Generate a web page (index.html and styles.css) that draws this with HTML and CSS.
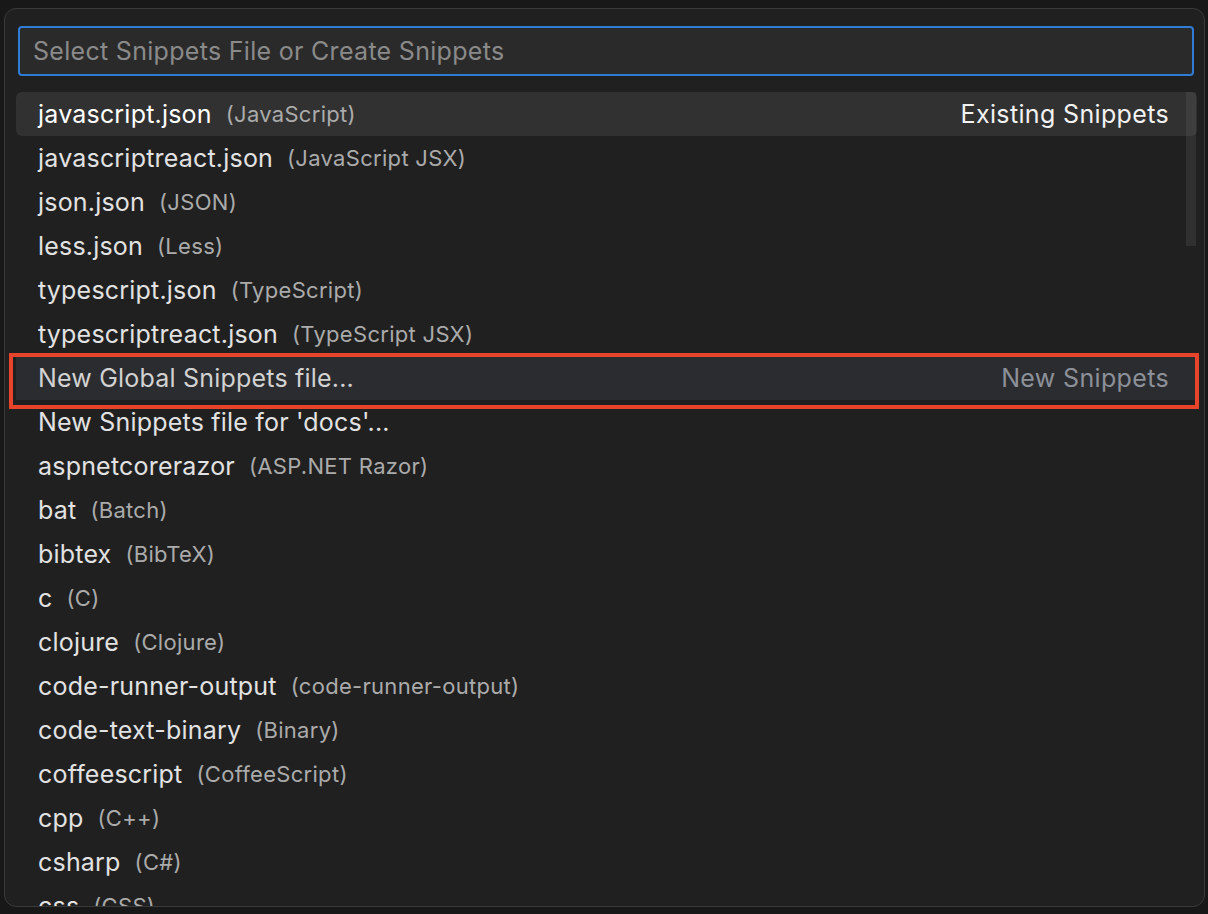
FILE: index.html
```html
<!DOCTYPE html>
<html>
<head>
<meta charset="utf-8">
<link rel="stylesheet" href="styles.css">
</head>
<body>
<div class="widget">
  <div class="input">Select Snippets File or Create Snippets</div>
  <div class="list">
    <div class="row active"><span class="label">javascript.json</span><span class="desc">(JavaScript)</span><span class="detail">Existing Snippets</span></div>
    <div class="row"><span class="label">javascriptreact.json</span><span class="desc">(JavaScript JSX)</span></div>
    <div class="row"><span class="label">json.json</span><span class="desc">(JSON)</span></div>
    <div class="row"><span class="label">less.json</span><span class="desc">(Less)</span></div>
    <div class="row"><span class="label">typescript.json</span><span class="desc">(TypeScript)</span></div>
    <div class="row"><span class="label">typescriptreact.json</span><span class="desc">(TypeScript JSX)</span></div>
    <div class="row hover"><span class="label">New Global Snippets file...</span><span class="detail">New Snippets</span></div>
    <div class="row"><span class="label">New Snippets file for 'docs'...</span></div>
    <div class="row"><span class="label">aspnetcorerazor</span><span class="desc">(ASP.NET Razor)</span></div>
    <div class="row"><span class="label">bat</span><span class="desc">(Batch)</span></div>
    <div class="row"><span class="label">bibtex</span><span class="desc">(BibTeX)</span></div>
    <div class="row"><span class="label">c</span><span class="desc">(C)</span></div>
    <div class="row"><span class="label">clojure</span><span class="desc">(Clojure)</span></div>
    <div class="row"><span class="label">code-runner-output</span><span class="desc">(code-runner-output)</span></div>
    <div class="row"><span class="label">code-text-binary</span><span class="desc">(Binary)</span></div>
    <div class="row"><span class="label">coffeescript</span><span class="desc">(CoffeeScript)</span></div>
    <div class="row"><span class="label">cpp</span><span class="desc">(C++)</span></div>
    <div class="row"><span class="label">csharp</span><span class="desc">(C#)</span></div>
    <div class="row"><span class="label">css</span><span class="desc">(CSS)</span></div>
  </div>
  <div class="scrollbar"></div>
  <div class="annotation"></div>
</div>
</body>
</html>
```

FILE: styles.css
```css
html, body {
  margin: 0;
  padding: 0;
  background: #181818;
  height: 914px;
  overflow: hidden;
}

body {
  font-family: Inter, "Noto Sans", sans-serif;
  -webkit-font-smoothing: antialiased;
}

.widget {
  position: relative;
  box-sizing: border-box;
  margin: 8px 0 0 4px;
  width: 1201px;
  height: 899px;
  background: #202020;
  border: 1px solid #3a3a3a;
  border-radius: 12px;
  overflow: hidden;
  padding-top: 17px;
}

.input {
  box-sizing: border-box;
  margin: 0 10px 0 13px;
  height: 50px;
  border: 2px solid #2f7bd6;
  border-radius: 4px;
  background: #2a2a2a;
  color: #8a8a8a;
  font-size: 25px;
  letter-spacing: 0.3px;
  line-height: 46px;
  padding-left: 13px;
}

.list {
  margin: 16px 7px 0 11px;
  display: flex;
  flex-direction: column;
}

.row {
  display: flex;
  align-items: center;
  height: 44px;
  padding: 0 28px 0 22px;
  border-radius: 6px;
  font-size: 25px;
  letter-spacing: 0.2px;
  color: #e2e2e2;
  white-space: nowrap;
  flex-shrink: 0;
}

.row .desc {
  margin-left: 14px;
  font-size: 22px;
  letter-spacing: 0.3px;
  color: #ababab;
}

.row .detail {
  margin-left: auto;
  letter-spacing: 0.35px;
}

.row.active {
  background: #313131;
  color: #ffffff;
}

.row.active .detail {
  color: #f2f2f2;
}

.row.hover {
  background: #2b2c2f;
  color: #d2d2d2;
  border-radius: 0;
}

.row.hover .detail {
  color: #8c9099;
}

.scrollbar {
  position: absolute;
  left: 1181px;
  top: 83px;
  width: 10px;
  height: 154px;
  background: rgba(120, 120, 120, 0.18);
}

.annotation {
  position: absolute;
  left: 4px;
  top: 344px;
  width: 1190px;
  height: 56px;
  box-sizing: border-box;
  border: 4px solid #e8432b;
}
```
